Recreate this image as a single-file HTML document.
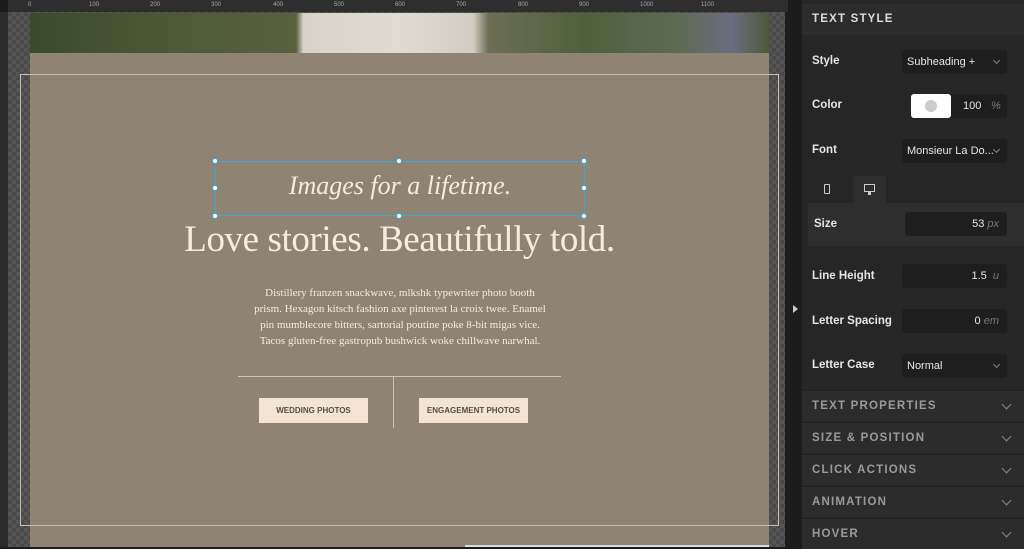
<!DOCTYPE html>
<html><head><style>
*{margin:0;padding:0;box-sizing:border-box}
body{width:1024px;height:547px;overflow:hidden;background:#1c1c1c;font-family:"Liberation Sans",sans-serif;position:relative}
.abs{position:absolute}
.checker{background-color:#4a4a4a;background-image:linear-gradient(45deg,#555 25%,transparent 25%,transparent 75%,#555 75%),linear-gradient(45deg,#555 25%,transparent 25%,transparent 75%,#555 75%);background-size:8px 8px;background-position:0 0,4px 4px}
.ruler{color:#aaa;font-size:6px}
.panel{left:802px;top:0;width:222px;height:547px;background:#262626}
.lbl{color:#e6e6e6;font-size:11.5px;font-weight:bold;left:10px}
.box{background:#1e1e1e;border-radius:3px;color:#e6e6e6;font-size:11px;height:24px;line-height:24px}
.sec{left:0;width:222px;height:31px;background:#2c2c2c;border-top:1px solid #222;color:#9a9a9a;font-size:11.5px;font-weight:bold;letter-spacing:1.2px;line-height:30px;padding-left:10px}
.chev{position:absolute;right:14px;top:10px;width:7px;height:7px;border-right:1.5px solid #888;border-bottom:1.5px solid #888;transform:rotate(45deg)}
.dd{position:absolute;right:8px;top:8px;width:5px;height:5px;border-right:1px solid #888;border-bottom:1px solid #888;transform:rotate(45deg)}
.h{position:absolute;width:6px;height:6px;border-radius:50%;background:#fff;border:1.5px solid #3aa7d6}
.btn{position:absolute;top:398px;width:109px;height:25px;background:#f4e4d2;color:#5a4e40;font-size:8px;font-weight:bold;text-align:center;line-height:25px;font-family:'Liberation Sans Narrow','Liberation Sans',sans-serif}
</style></head><body>
<div class="abs" style="left:8px;top:0;width:780px;height:12px;background:#2e2e2e"></div>
<div class="abs ruler" style="left:28px;top:2px;width:760px">
<span class="abs" style="left:0">0</span><span class="abs" style="left:61px">100</span><span class="abs" style="left:122px">200</span><span class="abs" style="left:183px">300</span><span class="abs" style="left:245px">400</span><span class="abs" style="left:306px">500</span><span class="abs" style="left:367px">600</span><span class="abs" style="left:428px">700</span><span class="abs" style="left:490px">800</span><span class="abs" style="left:551px">900</span><span class="abs" style="left:612px">1000</span><span class="abs" style="left:673px">1100</span></div>
<div class="abs" style="left:0;top:12px;width:8px;height:535px;background:#2a2a2a"></div>
<div class="abs checker" style="left:8px;top:12px;width:777px;height:535px"></div>
<div class="abs" style="left:30px;top:13px;width:739px;height:40px;background:linear-gradient(90deg,#3b4a2c 0%,#4d5a38 20%,#5a6040 36%,#d8d2c8 37%,#e0dbd2 50%,#d2cdc4 60%,#6c6e55 62%,#50603c 75%,#5e6a55 88%,#6a6c80 95%,#4c5a3a 100%)"></div>
<div class="abs" style="left:30px;top:53px;width:739px;height:494px;background:#8f8373"></div>
<div class="abs" style="left:20px;top:74px;width:759px;height:452px;border:1px solid #c9beae"></div>
<div class="abs" style="left:215px;top:161px;width:370px;height:55px;border:1.5px solid #3aa7d6"></div>
<div class="h" style="left:212px;top:158px"></div><div class="h" style="left:396px;top:158px"></div><div class="h" style="left:581px;top:158px"></div>
<div class="h" style="left:212px;top:185px"></div><div class="h" style="left:581px;top:185px"></div>
<div class="h" style="left:212px;top:213px"></div><div class="h" style="left:396px;top:213px"></div><div class="h" style="left:581px;top:213px"></div>
<div class="abs" style="left:215px;top:171px;width:370px;text-align:center;color:#f4ece0;font-family:'Liberation Serif',serif;font-style:italic;font-size:26px">Images for a lifetime.</div>
<div class="abs" style="left:30px;top:218px;width:739px;text-align:center;color:#f4ece0;font-family:'Liberation Serif',serif;font-size:37px;letter-spacing:-0.4px">Love stories. Beautifully told.</div>
<div class="abs" style="left:200px;top:285px;width:400px;text-align:center;color:#f4ece0;font-family:'Liberation Serif',serif;font-size:11px;line-height:16px;white-space:nowrap">Distillery franzen snackwave, mlkshk typewriter photo booth<br>prism. Hexagon kitsch fashion axe pinterest la croix twee. Enamel<br>pin mumblecore bitters, sartorial poutine poke 8-bit migas vice.<br>Tacos gluten-free gastropub bushwick woke chillwave narwhal.</div>
<div class="abs" style="left:238px;top:376px;width:323px;height:1px;background:#cfc4b3"></div>
<div class="abs" style="left:393px;top:377px;width:1px;height:51px;background:#cfc4b3"></div>
<div class="btn" style="left:259px">WEDDING PHOTOS</div>
<div class="btn" style="left:419px">ENGAGEMENT PHOTOS</div>
<div class="abs" style="left:465px;top:545px;width:304px;height:2px;background:#ddd"></div>
<div class="abs" style="left:793px;top:305px;width:0;height:0;border-left:5px solid #ccc;border-top:4px solid transparent;border-bottom:4px solid transparent"></div>
<div class="abs panel">
<div class="abs" style="left:0;top:4px;width:222px;height:31px;background:#2c2c2c;color:#ddd;font-size:11.5px;font-weight:bold;letter-spacing:1.2px;line-height:31px;padding-left:10px">TEXT STYLE</div>
<div class="abs lbl" style="top:55px">Style</div>
<div class="abs box" style="left:100px;top:50px;width:105px;padding-left:5px">Subheading +<span class="dd"></span></div>
<div class="abs lbl" style="top:99px">Color</div>
<div class="abs box" style="left:109px;top:94px;width:96px"><div class="abs" style="left:0;top:0;width:40px;height:24px;background:#fff;border-radius:3px"><div style="margin:6px 0 0 14px;width:12px;height:12px;border-radius:50%;background:#ccc"></div></div><span class="abs" style="left:52px">100</span><span class="abs" style="left:80px;color:#777;font-style:italic">%</span></div>
<div class="abs lbl" style="top:144px">Font</div>
<div class="abs box" style="left:100px;top:139px;width:105px;padding-left:5px">Monsieur La Do...<span class="dd"></span></div>
<div class="abs" style="left:51px;top:176px;width:33px;height:28px;background:#2e2e2e"></div>
<div class="abs" style="left:22px;top:184px;width:6px;height:10px;border:1px solid #ccc;border-radius:1px"></div>
<div class="abs" style="left:62px;top:184px;width:11px;height:8px;border:1.2px solid #ccc"></div><div class="abs" style="left:66px;top:192px;width:3px;height:3px;background:#ccc"></div>
<div class="abs" style="left:6px;top:203px;width:226px;height:43px;background:#2e2e2e"></div>
<div class="abs lbl" style="top:218px;left:12px">Size</div>
<div class="abs box" style="left:103px;top:212px;width:102px;text-align:right;padding-right:8px">53 <span style="color:#777;font-style:italic">px</span></div>
<div class="abs lbl" style="top:270px">Line Height</div>
<div class="abs box" style="left:100px;top:264px;width:105px;text-align:right;padding-right:8px">1.5 &nbsp;<span style="color:#777;font-style:italic">u</span></div>
<div class="abs lbl" style="top:315px">Letter Spacing</div>
<div class="abs box" style="left:100px;top:309px;width:105px;text-align:right;padding-right:8px">0 <span style="color:#777;font-style:italic">em</span></div>
<div class="abs lbl" style="top:359px">Letter Case</div>
<div class="abs box" style="left:100px;top:354px;width:105px;padding-left:5px">Normal<span class="dd"></span></div>
<div class="abs sec" style="top:390px">TEXT PROPERTIES<span class="chev"></span></div>
<div class="abs sec" style="top:422px">SIZE &amp; POSITION<span class="chev"></span></div>
<div class="abs sec" style="top:454px">CLICK ACTIONS<span class="chev"></span></div>
<div class="abs sec" style="top:486px">ANIMATION<span class="chev"></span></div>
<div class="abs sec" style="top:518px">HOVER<span class="chev"></span></div>
</div>
</body></html>
